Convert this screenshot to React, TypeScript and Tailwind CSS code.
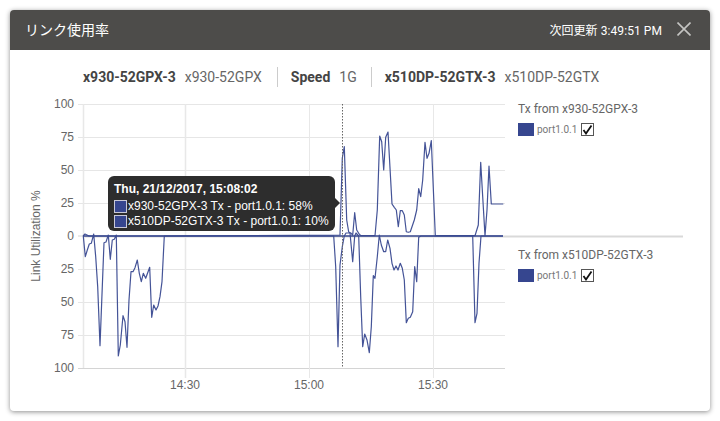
const top = "83,236 85,234 87,235 89,236 164,236 340,235 342.3,158 344.3,146.7 346.7,220 348.7,232 350.7,233 352.7,235 354.7,212.7 356.7,230 358.7,233.3 360.7,235.7 375,235.7 377.3,210 379.7,136 381.7,141.7 383.7,170 385.7,137.3 388,132 392,204 394.3,207.3 396.3,210 398.3,226.7 400.3,210.7 402.3,210.7 404.3,215 406.3,231.7 408.3,232.3 410.3,231.7 414.3,220 416.7,210 418.7,188.7 420.7,196.7 422.7,180 425,142.3 427,158.3 429,153.3 431.3,140.7 435.3,235.7 475,235.7 478.3,225 480.7,162.3 482.7,196.7 485,235.7 487,210 489,166 491.3,204 503.3,204";
const bottom = "83.3,236 85.3,256.7 87.3,250 89.3,244 91.3,243.3 93.7,234 95.7,256.7 97.7,286.7 100,345.7 104,242.7 106,242 108.3,235 110.3,259.3 112.3,240 114.3,239.3 116.3,235 118.3,356 120.3,345 123,315.7 125,321.7 127,347.3 129,300 131,271.7 133,271.7 135,267.7 137.3,260 139.3,273.3 141.3,281.7 143.3,273.3 145.7,278.3 149.7,267.3 151.7,317.3 153.7,305 156,310 158,306 160,296.7 162,281.7 164.3,236 333.7,236 335.7,266.7 338,346.7 340,265 342.3,246.7 344.3,236 346,233 350,233 352.7,261.7 354.7,236 356,233 358.7,236 360.7,296.7 362.7,346.7 364.7,334 367,340 369.3,352.7 371.3,326.7 373.3,275.7 375,278.3 377.3,256.7 379.3,235 381.3,245 383.7,251.7 385.7,251.7 387.7,240 390,248.3 392,263.3 394,270 396,266 398,270 400.3,263.3 402.3,268.3 404.3,280 406.3,322.7 408.3,318.3 410.3,317.3 412.7,311.7 414.7,266.7 416.7,281.7 418.7,237.3 421,236 472.7,236 475,322.7 477,313.3 479,263.3 481,236 503,236";

const hLines = [104, 137, 170, 203, 269, 302, 335];
const yLabels: [number, string][] = [[104, "100"], [137, "75"], [170, "50"], [203, "25"], [236, "0"], [269, "25"], [302, "50"], [335, "75"], [368, "100"]];

function Chart() {
  return (
    <svg width="498" height="311" viewBox="10 90 498 311" className="shrink-0 overflow-visible font-['Liberation_Sans',sans-serif]">
      {hLines.map((y) => (
        <line key={y} x1="78" x2="505" y1={y + 0.5} y2={y + 0.5} stroke="#e6e6e6" />
      ))}
      <line x1="78" x2="505" y1="368.5" y2="368.5" stroke="#d4d4d4" />
      <line x1="78" x2="83" y1="236" y2="236" stroke="#d4d4d4" />
      <line x1="83" x2="683" y1="236.5" y2="236.5" stroke="#d9d9d9" strokeWidth="2" />
      {[83.5, 185.5, 309.5, 433.5].map((x, i) => (
        <line key={x} x1={x} x2={x} y1="104" y2={i === 0 ? 368 : 378} stroke="#e8e8e8" strokeWidth={i < 2 ? 1.5 : 1} />
      ))}
      {yLabels.map(([y, t]) => (
        <text key={y} x="74" y={y + 4} textAnchor="end" fontSize="12" fill="#666">{t}</text>
      ))}
      <text x="185" y="389" textAnchor="middle" fontSize="12" fill="#666">14:30</text>
      <text x="309" y="389" textAnchor="middle" fontSize="12" fill="#666">15:00</text>
      <text x="433" y="389" textAnchor="middle" fontSize="12" fill="#666">15:30</text>
      <text transform="translate(40 236) rotate(-90)" textAnchor="middle" fontSize="12" fill="#666">Link Utilization %</text>
      <polyline points={bottom} fill="none" stroke="#3a4a91" strokeWidth="1.2" strokeLinejoin="round" opacity="0.95" />
      <polyline points={top} fill="none" stroke="#3a4a91" strokeWidth="1.2" strokeLinejoin="round" opacity="0.95" />
      <line x1="83" x2="503" y1="236" y2="236" stroke="#3a4a91" strokeWidth="1.5" />
      <line x1="342.5" x2="342.5" y1="104" y2="368" stroke="#666" strokeDasharray="1.5 1.5" />
    </svg>
  );
}

function Legend({ title, className }: { title: string; className: string }) {
  return (
    <div className={className}>
      <div className="text-[12px] leading-[14px] text-[#666]">{title}</div>
      <div className="mt-[7px] flex items-center">
        <span className="h-[13px] w-[16px] bg-[#36468f]" />
        <span className="ml-[3px] text-[10px] leading-[12px] text-[#777]">port1.0.1</span>
        <span className="ml-[4px] flex h-[13px] w-[13px] items-center justify-center border border-[#555] bg-white">
          <svg width="11" height="11" viewBox="0 0 11 11">
            <path d="M1.5 6 L4 9.5 L9.5 1.5" fill="none" stroke="#111" strokeWidth="1.8" />
          </svg>
        </span>
      </div>
    </div>
  );
}

function Row({ name, value }: { name: string; value: string }) {
  return (
    <div className="flex items-center">
      <span className="h-[13px] w-[13px] shrink-0 border border-[#c9c9d8] bg-[#36468f]" />
      <span className="ml-[1px]">{name} - port1.0.1: {value}</span>
    </div>
  );
}

export default function App() {
  return (
    <div className="h-[421px] w-[720px] overflow-hidden bg-white p-[10px] font-['Roboto','Noto_Sans_CJK_JP',sans-serif]">
      <div className="relative h-[401px] w-[700px] rounded-[4px] bg-white shadow-[0_1px_5px_rgba(0,0,0,0.45)]">
        <div className="flex h-[40px] items-center justify-between rounded-t-[4px] bg-[#4d4c4a] pl-[15px] pr-[19px] text-white">
          <span className="text-[14px]">リンク使用率</span>
          <div className="flex items-center">
            <span className="mt-[1px] text-[12px] tracking-[0.07px]">次回更新 3:49:51 PM</span>
            <svg className="ml-[15px] mb-[3px]" width="14" height="14" viewBox="0 0 14 14">
              <path d="M0.5 0.5 L13.5 13.5 M13.5 0.5 L0.5 13.5" stroke="#c4c4c2" strokeWidth="1.6" fill="none" />
            </svg>
          </div>
        </div>
        <div className="flex h-[40px] items-start pl-[73px] pt-[17px] text-[14px] leading-[20px] text-[#666]">
          <b className="font-bold text-[#444]">x930-52GPX-3</b>
          <span className="ml-[9px]">x930-52GPX</span>
          <span className="ml-[15px] h-[20px] w-px bg-[#ccc]" />
          <b className="ml-[13px] font-bold text-[#444]">Speed</b>
          <span className="ml-[9px]">1G</span>
          <span className="ml-[14px] h-[20px] w-px bg-[#ccc]" />
          <b className="ml-[13px] font-bold text-[#444]">x510DP-52GTX-3</b>
          <span className="ml-[9px]">x510DP-52GTX</span>
        </div>
        <div className="flex">
          <Chart />
          <div className="ml-[10px] flex flex-col">
            <Legend title="Tx from x930-52GPX-3" className="pt-[12px]" />
            <Legend title="Tx from x510DP-52GTX-3" className="mt-[112px]" />
          </div>
        </div>
        <div className="absolute left-[98px] top-[166px] h-[55px] w-[227px] rounded-[6px] bg-[#2d2d2d] px-[6px] pt-[6px] font-['Liberation_Sans',sans-serif] text-[12px] leading-[15px] text-white">
          <div className="font-bold">Thu, 21/12/2017, 15:08:02</div>
          <div className="mt-[2px]">
            <Row name="x930-52GPX-3 Tx" value="58%" />
            <Row name="x510DP-52GTX-3 Tx" value="10%" />
          </div>
          <span className="absolute left-full top-[22px] h-0 w-0 border-y-[5px] border-l-[5px] border-y-transparent border-l-[#2d2d2d]" />
        </div>
      </div>
    </div>
  );
}
